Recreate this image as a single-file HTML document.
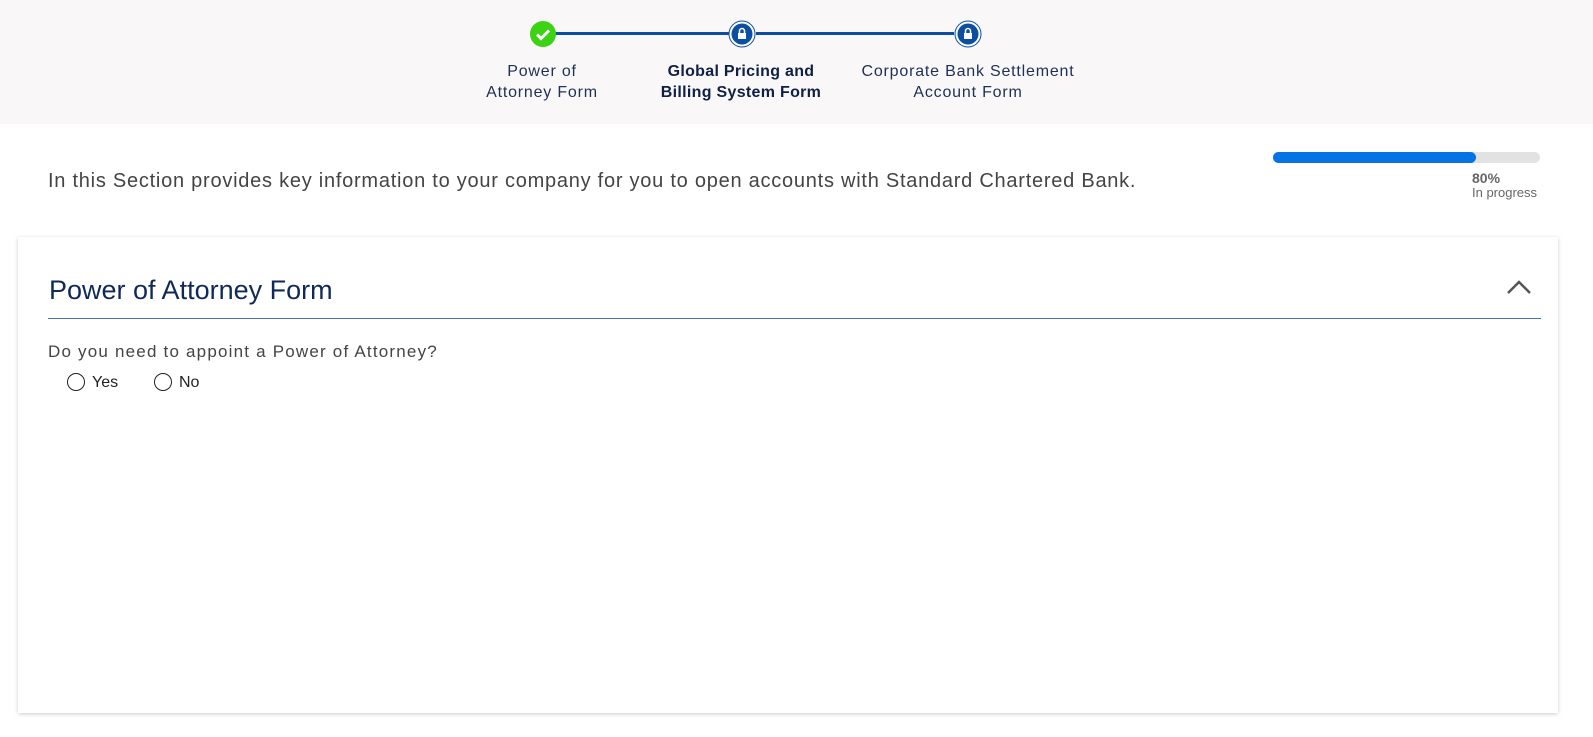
<!DOCTYPE html>
<html><head><style>
body{margin:0;width:1593px;height:737px;background:#fff;font-family:"Liberation Sans",sans-serif;position:relative;overflow:hidden}
.top{position:absolute;left:0;top:0;width:1593px;height:124px;background:#f9f7f8}
.line{position:absolute;top:32px;height:3px;background:#0b4ea2}
.lbl{position:absolute;top:61px;font-size:16px;line-height:21px;color:#1f3055;text-align:center;transform:translateX(-50%);white-space:nowrap;letter-spacing:0.8px}
.ic{position:absolute}
.card{position:absolute;left:18px;top:237px;width:1540px;height:476px;background:#fff;box-shadow:0 1px 4px rgba(0,0,0,.2)}
</style></head><body>
<div class="top"></div>
<div class="line" style="left:555px;width:175px"></div>
<div class="line" style="left:756px;width:198px"></div>
<svg class="ic" style="left:529px;top:20px" width="28" height="28"><circle cx="14" cy="14" r="13" fill="#3dd213"/><path d="M8 14.5l4 4 8-8" stroke="#fff" stroke-width="3" fill="none"/></svg>
<svg class="ic" style="left:728px;top:20px" width="28" height="28"><circle cx="14" cy="14" r="13" fill="#fff" stroke="#0b4ea2" stroke-width="1"/><circle cx="14" cy="14" r="10.5" fill="#0b4ea2"/><rect x="10" y="13" width="8" height="6" fill="#fff"/><path d="M11.5 13v-2a2.5 2.5 0 0 1 5 0v2" stroke="#fff" stroke-width="1.5" fill="none"/></svg>
<svg class="ic" style="left:954px;top:20px" width="28" height="28"><circle cx="14" cy="14" r="13" fill="#fff" stroke="#0b4ea2" stroke-width="1"/><circle cx="14" cy="14" r="10.5" fill="#0b4ea2"/><rect x="10" y="13" width="8" height="6" fill="#fff"/><path d="M11.5 13v-2a2.5 2.5 0 0 1 5 0v2" stroke="#fff" stroke-width="1.5" fill="none"/></svg>
<div class="lbl" style="left:542px">Power of<br>Attorney Form</div>
<div class="lbl" style="left:741px;font-weight:bold;color:#0f1f45;letter-spacing:0.3px">Global Pricing and<br>Billing System Form</div>
<div class="lbl" style="left:968px">Corporate Bank Settlement<br>Account Form</div>
<div style="position:absolute;left:48px;top:170px;font-size:20px;color:#444;letter-spacing:0.75px">In this Section provides key information to your company for you to open accounts with Standard Chartered Bank.</div>
<div style="position:absolute;left:1273px;top:152px;width:267px;height:11px;border-radius:6px;background:#e2e2e2"><div style="width:203px;height:11px;border-radius:6px;background:#0473e6"></div></div>
<div style="position:absolute;left:1472px;top:171px;font-size:14px;line-height:14px;color:#666"><b>80%</b><br><span style="font-size:13px">In progress</span></div>
<div class="card">
<div style="position:absolute;left:31px;top:38px;font-size:27px;color:#0f2a5a">Power of Attorney Form</div>
<svg style="position:absolute;left:1488px;top:42px" width="26" height="16"><path d="M2 14l11-11 11 11" stroke="#555" stroke-width="2.5" fill="none"/></svg>
<div style="position:absolute;left:30px;top:81px;width:1493px;height:1px;background:#4a6fb0"></div>
<div style="position:absolute;left:30px;top:105px;font-size:17px;color:#444;letter-spacing:1.2px">Do you need to appoint a Power of Attorney?</div>
<div style="position:absolute;left:49px;top:136px;width:18px;height:18px;border:1.5px solid #222;border-radius:50%;box-sizing:border-box"></div>
<div style="position:absolute;left:74px;top:137px;font-size:16px;color:#222">Yes</div>
<div style="position:absolute;left:136px;top:136px;width:18px;height:18px;border:1.5px solid #222;border-radius:50%;box-sizing:border-box"></div>
<div style="position:absolute;left:161px;top:137px;font-size:16px;color:#222">No</div>
</div>
</body></html>
